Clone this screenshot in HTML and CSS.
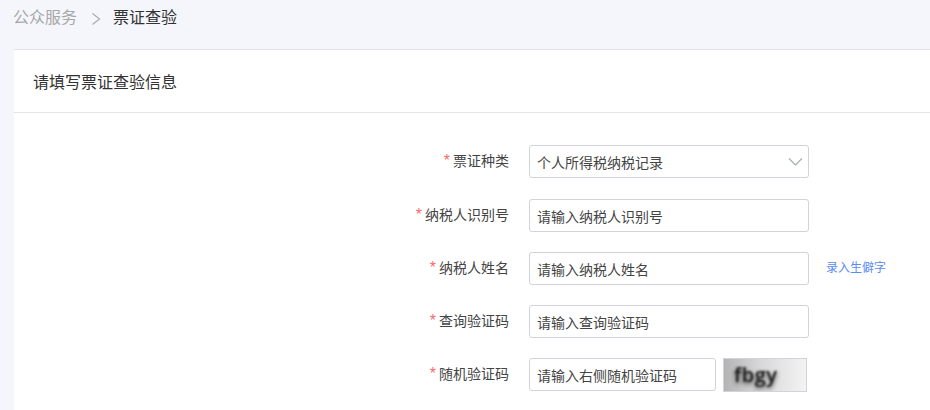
FILE: index.html
```html
<!DOCTYPE html>
<html lang="zh-CN">
<head>
<meta charset="utf-8">
<title>票证查验</title>
<link rel="stylesheet" href="styles.css">
</head>
<body>
<nav class="crumbs">
  <span class="crumb-link">公众服务</span>
  <svg class="crumb-sep" width="11" height="14" viewBox="0 0 11 14"><path d="M1.5 1.5 L8.5 7 L1.5 12.5" fill="none" stroke="#a9abb0" stroke-width="1.2"/></svg>
  <span class="crumb-current">票证查验</span>
</nav>
<main class="card">
  <header class="card-head">请填写票证查验信息</header>
  <form class="form">
    <div class="row row-first">
      <label class="label"><i>*</i>票证种类</label>
      <div class="control select"><span>个人所得税纳税记录</span>
        <svg class="chev" width="16" height="10" viewBox="0 0 16 10"><path d="M1 1.5 L7.5 8 L14 1.5" fill="none" stroke="#a3b0a9" stroke-width="1.2"/></svg>
      </div>
    </div>
    <div class="row">
      <label class="label"><i>*</i>纳税人识别号</label>
      <div class="control"><span>请输入纳税人识别号</span></div>
    </div>
    <div class="row">
      <label class="label"><i>*</i>纳税人姓名</label>
      <div class="control"><span>请输入纳税人姓名</span></div>
      <a class="link">录入生僻字</a>
    </div>
    <div class="row">
      <label class="label"><i>*</i>查询验证码</label>
      <div class="control"><span>请输入查询验证码</span></div>
    </div>
    <div class="row">
      <label class="label"><i>*</i>随机验证码</label>
      <div class="control short"><span>请输入右侧随机验证码</span></div>
      <div class="captcha"><span>fbgy</span></div>
    </div>
  </form>
</main>
</body>
</html>
```
FILE: styles.css
```css
* { box-sizing: border-box; }
html, body { margin: 0; height: 410px; overflow: hidden; }
body {
  background: #f4f6fb;
  padding-left: 14px;
  font-family: "Liberation Sans", "Noto Sans CJK SC", sans-serif;
  color: #333;
}
.crumbs {
  height: 49px;
  display: flex;
  align-items: flex-start;
  padding-top: 7px;
  font-size: 16px;
  line-height: 22px;
}
.crumb-link { color: #a7a7a7; margin-left: -1px; }
.crumb-sep { margin: 5px 11px 0 14px; }
.crumb-current { color: #333; }
.card {
  background: #fff;
  height: 361px;
  border-top: 1px solid #e3e4ea;
}
.card-head {
  height: 63px;
  padding: 21px 0 0 19px;
  font-size: 16px;
  line-height: 24px;
  border-bottom: 1px solid #e3e4ea;
}
.form { padding-top: 32px; }
.row {
  display: flex;
  align-items: flex-start;
  height: 33px;
  margin-bottom: 20px;
}
.row-first { margin-bottom: 21px; }
.label {
  width: 495px;
  padding-top: 5px;
  text-align: right;
  font-size: 14px;
  line-height: 22px;
  color: #444;
}
.label i {
  font-style: normal;
  font-size: 16px;
  line-height: 16px;
  color: #f56c6c;
  margin-right: 3px;
}
.control {
  width: 280px;
  height: 33px;
  margin-left: 20px;
  padding: 0 4px 0 8px;
  display: flex;
  align-items: center;
  justify-content: space-between;
  background: #fff;
  border: 1px solid #d2d3da;
  border-radius: 3px;
  font-size: 14px;
  color: #444;
}
.control span { margin-left: -1px; margin-top: 1px; }
.chev { flex: none; }
.short { width: 187px; }
.link {
  margin: 5px 0 0 17px;
  font-size: 12px;
  line-height: 22px;
  color: #5a8cf0;
}
.captcha {
  width: 84px;
  height: 34px;
  margin-left: 7px;
  overflow: hidden;
  background: linear-gradient(90deg, #b4b4b4, #d8d8d8 45%, #f3f3f3);
  border: 1px solid #d2d3da;
}
.captcha span {
  display: block;
  width: 66px;
  padding: 3px 0 0 10px;
  font-family: "Open Sans", sans-serif;
  font-size: 20px;
  font-weight: 600;
  line-height: 26px;
  letter-spacing: 0.5px;
  color: #1c1c1c;
  filter: blur(0.9px);
  text-shadow: 0 2px 4px rgba(0, 0, 0, 0.7);
}
```
